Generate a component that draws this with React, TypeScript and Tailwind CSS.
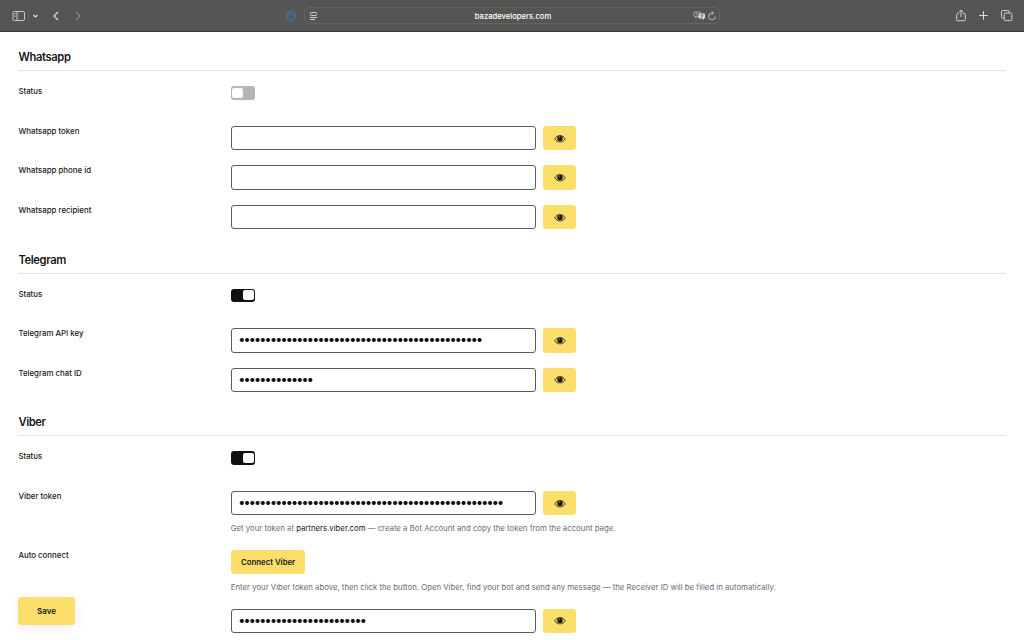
import type { ReactNode } from "react";

function EyeIcon() {
  return (
    <svg width="12" height="9" viewBox="0 0 12 9" fill="none">
      <path
        d="M0.8 4.800C2 2.800 3.800 1.600 6 1.600s4 1.200 5.200 3.200C10 6.800 8.200 7.900 6 7.900S2 6.800 0.800 4.800Z"
        stroke="#2a2610"
        strokeWidth="0.9"
      />
      <circle cx="6" cy="4.400" r="2.700" fill="#15130a" />
      <path d="M5.700 2.300v1.800" stroke="#d8bd5a" strokeWidth="0.700" />
    </svg>
  );
}

function Toggle({ on }: { on: boolean }) {
  return (
    <span
      role="switch"
      aria-checked={on}
      className={
        on
          ? "flex h-[13.4px] w-[24.4px] items-center justify-end rounded-[3px] bg-[#111111] p-[1.5px]"
          : "flex h-[13.4px] w-[24.4px] items-center rounded-[3px] bg-[#b5b5b5] p-[1.5px]"
      }
    >
      <span className="h-[10.4px] w-[10.4px] rounded-[2px] bg-white" />
    </span>
  );
}

function Row({ label, children }: { label: string; children: ReactNode }) {
  return (
    <div className="flex min-h-[24.4px]">
      <div className="w-[212.7px] shrink-0 pl-[0.3px] text-[7.85px] leading-[10.6px] font-medium">
        {label}
      </div>
      <div>{children}</div>
    </div>
  );
}

function SecretField({ length = 0 }: { length?: number }) {
  return (
    <div className="flex gap-[7.5px]">
      <input
        type="password"
        readOnly
        value={"0".repeat(length)}
        className="h-[24.4px] w-[305px] rounded-[3px] border border-[#5c5c5c] pr-[7px] pb-px pl-[6.4px] text-[12.6px] tracking-[-1.8px] text-[#0c0c0c]"
      />
      <button
        type="button"
        aria-label="Show value"
        className="flex h-[24.4px] w-[33px] items-center justify-center rounded-[3px] bg-[#fcdf6b]"
      >
        <EyeIcon />
      </button>
    </div>
  );
}

function Section({ title, children }: { title: string; children: ReactNode }) {
  return (
    <section>
      <h2 className="h-[22px] border-b border-[#e2e2e2] pl-[0.3px] text-[11.2px] leading-[16.8px] font-semibold tracking-[-0.36px]">
        {title}
      </h2>
      <div className="mt-[15.1px] flex flex-col gap-[15.2px]">{children}</div>
    </section>
  );
}

function Hint({ children }: { children: ReactNode }) {
  return (
    <p className="mt-[7.2px] h-[12.1px] text-[7.79px] leading-[12.5px] whitespace-nowrap text-[#686c78]">
      {children}
    </p>
  );
}

function BrowserBar() {
  return (
    <header className="flex h-8 items-center border-b border-[#3b3b39] bg-[#555553] text-[#d2d2d0]">
      <div className="flex w-[285px] items-center pl-3">
        <svg width="14" height="12" viewBox="0 0 14 12" fill="none" stroke="currentColor">
          <rect x="1" y="1.5" width="11.5" height="9" rx="1.3" strokeWidth="0.9" />
          <path d="M5 1.5v9" strokeWidth="0.9" />
          <path d="M2.300 3.500h1.400M2.300 5h1.400M2.300 6.500h1.400" strokeWidth="0.7" />
        </svg>
        <span className="ml-[2px] h-3 w-px bg-[#5e5e5c]" />
        <svg className="ml-[3px]" width="7" height="6" viewBox="0 0 7 6" fill="none" stroke="#e6e6e4">
          <path d="M1.500 2l2 2 2-2" strokeWidth="1.2" />
        </svg>
        <svg className="ml-[13px]" width="8" height="12" viewBox="0 0 8 12" fill="none" stroke="#dededc">
          <path d="M6 2L2 6l4 4" strokeWidth="1.2" />
        </svg>
        <svg className="ml-[14px]" width="8" height="12" viewBox="0 0 8 12" fill="none" stroke="#858583">
          <path d="M2 2l4 4-4 4" strokeWidth="1.1" />
        </svg>
      </div>
      <svg width="12" height="12" viewBox="0 0 12 12" fill="none" stroke="#466f9f">
        <path d="M6 0.800l4.600 2.600v5.200L6 11.200 1.400 8.600V3.400Z" strokeWidth="1.2" />
        <path
          d="M6 2.800l2.700 1v2.400C8.700 7.600 7.500 8.700 6 9.300 4.500 8.700 3.300 7.600 3.300 6.200V3.800Z"
          strokeWidth="1"
        />
        <path d="M6 4.300v2.800M4.700 5.700h2.600" strokeWidth="0.8" />
      </svg>
      <div className="ml-[7px] flex h-[17px] w-[416px] items-center rounded-[5px] border border-[#636361] pl-[4px]">
        <svg width="9" height="10" viewBox="0 0 9 10" fill="none" stroke="#cfcfcd">
          <rect x="1.5" y="1.5" width="6" height="3" rx="0.8" strokeWidth="1" />
          <path d="M1 6.500h7M1 8.500h5" strokeWidth="1" />
        </svg>
        <span className="w-[375px] pt-[2px] pl-[15px] text-center text-[7.65px] leading-[10px] font-medium text-white">
          bazadevelopers.com
        </span>
        <svg width="13" height="10" viewBox="0 0 13 10" fill="none">
          <path
            d="M2 1h4.500q1 0 1 1v3.500H4L2.700 7V5.500H2q-1 0-1-1V2q0-1 1-1Z"
            stroke="#c4c4c2"
            strokeWidth="0.8"
          />
          <path d="M3 4.500L4.200 2.200l1 2" stroke="#c4c4c2" strokeWidth="0.6" />
          <path
            d="M6.500 2.500H11q1 0 1 1V6.500q0 1-1 1v1.500L9.500 7.500h-3q-1 0-1-1v-3q0-1 1-1Z"
            fill="#dededc"
          />
          <path
            d="M7.200 4h3.200M8.800 3.400V4M10 4L7.400 6.500M7.800 4.500l2.400 2"
            stroke="#555553"
            strokeWidth="0.6"
          />
        </svg>
        <svg className="ml-px" width="10" height="10" viewBox="0 0 10 10" fill="none" stroke="#c8c8c6">
          <path d="M8.400 5.400A3.400 3.400 0 1 1 5 2h1.200" strokeWidth="0.9" />
          <path d="M4.700 0.500L6.300 2 4.700 3.600" strokeWidth="0.9" />
        </svg>
      </div>
      <div className="ml-auto flex items-center gap-[11px] pr-[11px]">
        <svg width="12" height="13" viewBox="0 0 12 13" fill="none" stroke="currentColor">
          <path
            d="M4 4.500H2.500q-0.800 0-0.800 0.800v5.600q0 0.800 0.800 0.800h7q0.800 0 0.800-0.800V5.300q0-0.800-0.800-0.800H8M6 8V1.300M3.900 3.200L6 1.200l2.100 2"
            strokeWidth="1"
          />
        </svg>
        <svg width="11" height="11" viewBox="0 0 11 11" fill="none" stroke="#e0e0de">
          <path d="M5.500 1.200v8.600M1.200 5.500h8.600" strokeWidth="1" />
        </svg>
        <svg width="13" height="13" viewBox="0 0 13 13" fill="none" stroke="currentColor">
          <rect x="4.2" y="4" width="7.600" height="7.600" rx="1.3" strokeWidth="1" />
          <path
            d="M4 9H2.800q-1.300 0-1.300-1.300V2.800q0-1.300 1.300-1.300h5q1.300 0 1.300 1.300V4"
            strokeWidth="1"
          />
        </svg>
      </div>
    </header>
  );
}

export default function App() {
  return (
    <div className="relative h-[640px] w-[1024px] overflow-hidden bg-white font-['Inter',sans-serif] text-[#15171a]">
      <BrowserBar />
      <main className="flex flex-col gap-[22.1px] pt-[17.2px] pr-[18px] pl-[18.1px]">
        <Section title="Whatsapp">
          <Row label="Status">
            <Toggle on={false} />
          </Row>
          <Row label="Whatsapp token">
            <SecretField />
          </Row>
          <Row label="Whatsapp phone id">
            <SecretField />
          </Row>
          <Row label="Whatsapp recipient">
            <SecretField />
          </Row>
        </Section>
        <Section title="Telegram">
          <Row label="Status">
            <Toggle on />
          </Row>
          <Row label="Telegram API key">
            <SecretField length={46} />
          </Row>
          <Row label="Telegram chat ID">
            <SecretField length={14} />
          </Row>
        </Section>
        <Section title="Viber">
          <Row label="Status">
            <Toggle on />
          </Row>
          <Row label="Viber token">
            <SecretField length={50} />
            <Hint>
              Get your token at <a className="text-[#15171a]">partners.viber.com</a> — create a Bot
              Account and copy the token from the account page.
            </Hint>
          </Row>
          <Row label="Auto connect">
            <button
              type="button"
              className="flex h-[24.4px] w-[74.7px] items-center justify-center rounded-[3px] bg-[#fcdf6b] pt-px text-[7.8px] font-semibold"
            >
              Connect Viber
            </button>
            <Hint>
              Enter your Viber token above, then click the button. Open Viber, find your bot and send
              any message — the Receiver ID will be filled in automatically.
            </Hint>
          </Row>
          <Row label="">
            <SecretField length={24} />
          </Row>
        </Section>
      </main>
      <button
        type="button"
        className="absolute top-[597px] left-[18px] h-7 w-[57px] rounded-[3px] bg-[#fcdf6b] text-[8px] font-semibold shadow-[0_3px_12px_rgba(0,0,0,0.08)]"
      >
        Save
      </button>
    </div>
  );
}
